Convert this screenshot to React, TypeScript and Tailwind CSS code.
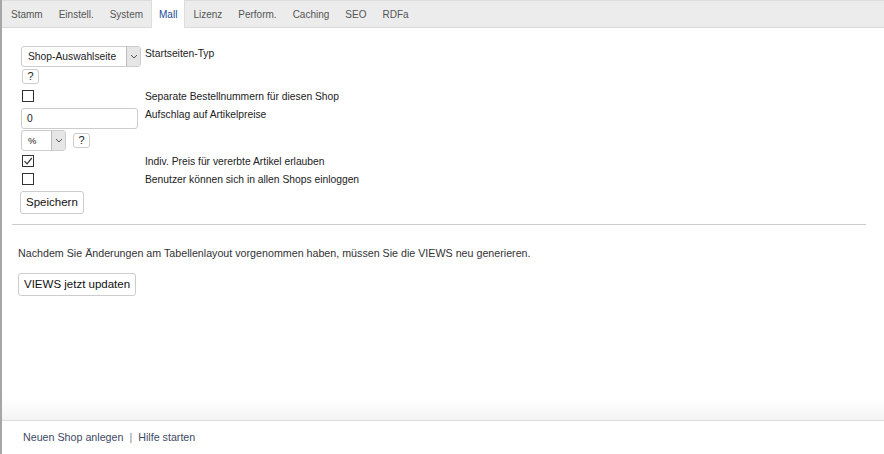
import React from "react";

const tabs = ["Stamm", "Einstell.", "System", "Mall", "Lizenz", "Perform.", "Caching", "SEO", "RDFa"];

function Help() {
  return (
    <button className="flex h-[15px] w-[17px] items-center justify-center rounded-[3px] border border-[#ccc] bg-white text-[11px] leading-none text-[#222]">
      ?
    </button>
  );
}

function Box({ checked }: { checked?: boolean }) {
  return (
    <span className="flex h-[12px] w-[12px] items-center justify-center border border-[#333] bg-white">
      {checked && (
        <svg width="10" height="10" viewBox="0 0 10 10">
          <path d="M1.5 5.2 L4 7.8 L8.8 2" fill="none" stroke="#333" strokeWidth="1.2" />
        </svg>
      )}
    </span>
  );
}

function Caret() {
  return (
    <span className="flex h-full w-[14px] items-center justify-center border-l border-[#bbb] bg-[#e6e6e6]">
      <svg width="8" height="5" viewBox="0 0 8 5">
        <path d="M1 1 L4 4 L7 1" fill="none" stroke="#555" strokeWidth="1" />
      </svg>
    </span>
  );
}

export default function App() {
  return (
    <div className="flex h-[454px] w-[884px] flex-col border-l-2 border-[#a6a6a6] bg-white font-['Liberation_Sans',sans-serif] text-[#222]">
      <div className="flex h-[28px] w-[882px] items-end border-b border-[#d9d9d9] border-t border-t-[#ddd] bg-[#ececec] pl-[1px] text-[10px] text-[#555]">
        {tabs.map((t) => (
          <div
            key={t}
            className={
              t === "Mall"
                ? "-mb-px flex h-[28px] items-center border-x border-[#ddd] bg-white px-[7px] text-[#1a4a9a]"
                : "flex h-[26px] items-center px-[8px]"
            }
          >
            {t}
          </div>
        ))}
      </div>

      <div className="ml-[10px] mt-[18px] w-[854px]">
        <div className="flex flex-col pl-[9px] text-[10.3px] leading-[13px]">
          <div className="flex h-[40px]">
            <div className="flex w-[124px] flex-col gap-[2px]">
              <div className="flex h-[21px] w-[120px] items-center justify-between rounded-[3px] border border-[#ccc] pl-[6px]">
                <span>Shop-Auswahlseite</span>
                <Caret />
              </div>
              <div className="pl-[1px]">
                <Help />
              </div>
            </div>
            <div className="pt-[1px]">Startseiten-Typ</div>
          </div>

          <div className="flex h-[22px] items-start pt-[4px]">
            <div className="w-[124px] pl-[1px]">
              <Box />
            </div>
            <div>Separate Bestellnummern für diesen Shop</div>
          </div>

          <div className="flex h-[44px]">
            <div className="flex w-[124px] flex-col gap-[1px]">
              <div className="flex h-[21px] w-[117px] items-center rounded-[3px] border border-[#ccc] pl-[5px]">0</div>
              <div className="flex items-center gap-[7px]">
                <div className="flex h-[21px] w-[45px] items-center justify-between rounded-[3px] border border-[#ccc] pl-[6px]">
                  <span className="text-[9.5px]">%</span>
                  <Caret />
                </div>
                <Help />
              </div>
            </div>
            <div>Aufschlag auf Artikelpreise</div>
          </div>

          <div className="flex h-[18px] items-start pt-[3px]">
            <div className="w-[124px] pl-[1px]">
              <Box checked />
            </div>
            <div>Indiv. Preis für vererbte Artikel erlauben</div>
          </div>

          <div className="flex h-[21px] items-start pt-[3px]">
            <div className="w-[124px] pl-[1px]">
              <Box />
            </div>
            <div>Benutzer können sich in allen Shops einloggen</div>
          </div>

          <div>
            <button className="-ml-px h-[23px] rounded-[3px] border border-[#ccc] bg-white px-[5px] text-[11.5px] text-[#111]">
              Speichern
            </button>
          </div>
        </div>

        <div className="mt-[10px] border-t border-[#ccc]" />

        <p className="mt-[21px] pl-[6px] text-[10.7px] leading-[14px] text-[#333]">
          Nachdem Sie Änderungen am Tabellenlayout vorgenommen haben, müssen Sie die VIEWS neu generieren.
        </p>
        <div className="mt-[11px] pl-[6px]">
          <button className="h-[23px] rounded-[3px] border border-[#ccc] bg-white px-[5px] text-[11.5px] text-[#111]">
            VIEWS jetzt updaten
          </button>
        </div>
      </div>

      <div className="mt-auto">
        <div className="h-[22px] bg-gradient-to-b from-white to-[#f4f4f4]" />
        <div className="flex h-[34px] items-center border-t border-[#dcdcdc] pl-[21px] text-[10.7px] text-[#3d4a66]">
          <span>Neuen Shop anlegen</span>
          <span className="mx-[6px] text-[#888]">|</span>
          <span>Hilfe starten</span>
        </div>
      </div>
    </div>
  );
}
